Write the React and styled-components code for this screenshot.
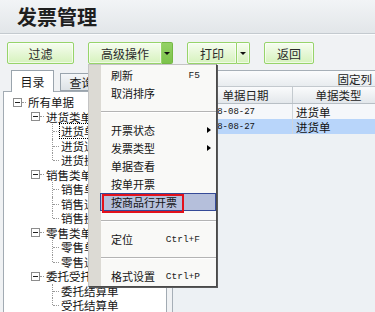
import React from "react"
import styled, { createGlobalStyle, css } from "styled-components"

const GlobalStyle = createGlobalStyle`
  html, body {
    margin: 0;
    padding: 0;
  }
  body {
    background: #f0f2f4;
    font-family: "Noto Sans CJK SC", "Noto Sans", sans-serif;
  }
`

const tree = [
  { label: '所有单据', level: 0 },
  { label: '进货类单据', level: 1 },
  { label: '进货单', level: 2, focus: true },
  { label: '进货退货单', level: 2 },
  { label: '进货换货单', level: 2, last: true },
  { label: '销售类单据', level: 1 },
  { label: '销售单', level: 2 },
  { label: '销售退货单', level: 2 },
  { label: '销售换货单', level: 2, last: true },
  { label: '零售类单据', level: 1 },
  { label: '零售单', level: 2 },
  { label: '零售退货单', level: 2, last: true },
  { label: '委托受托单据', level: 1 },
  { label: '委托结算单', level: 2 },
  { label: '受托结算单', level: 2, last: true },
]

const menu = [
  { label: '刷新', key: 'F5' },
  { label: '取消排序' },
  { sep: true },
  { label: '开票状态', sub: true },
  { label: '发票类型', sub: true },
  { label: '单据查看' },
  { label: '按单开票' },
  { label: '按商品行开票', active: true },
  { sep: true },
  { label: '定位', key: 'Ctrl+F' },
  { sep: true },
  { label: '格式设置', key: 'Ctrl+P' },
]

const rows = [
  { date: '2018-08-27', type: '进货单' },
  { date: '2018-08-27', type: '进货单', selected: true },
]

function App() {
  return (
    <Screen>
      <GlobalStyle />
      <TitleBar>
        <Title>发票管理</Title>
      </TitleBar>

      <Toolbar>
        <Button $w={67}>过滤</Button>
        <SplitGroup>
          <Button $w={74} $split>高级操作</Button>
          <ArrowButton $w={11} $open><Caret /></ArrowButton>
          <Menu>
            {menu.map((m, i) =>
              m.sep ? (
                <Separator key={i} />
              ) : (
                <MenuItem key={i} $active={m.active} $sub={m.sub}>
                  <span>{m.label}</span>
                  {m.key && <Shortcut>{m.key}</Shortcut>}
                  {m.sub && <SubArrow />}
                  {m.active && <Annotation />}
                </MenuItem>
              )
            )}
          </Menu>
        </SplitGroup>
        <SplitGroup>
          <Button $w={50} $split>打印</Button>
          <ArrowButton $w={13}><Caret /></ArrowButton>
        </SplitGroup>
        <Button $w={50}>返回</Button>
      </Toolbar>

      <Main>
        <LeftPanel>
          <TabStrip>
            <Tab $active>目录</Tab>
            <Tab>查询</Tab>
          </TabStrip>
          <TreeBox>
            {tree.map((n, i) => (
              <TreeRow key={i} $level={n.level}>
                {n.level < 2 ? (
                  <>
                    <Expander />
                    <Dash />
                  </>
                ) : (
                  <Connector $last={n.last} />
                )}
                <NodeLabel $focus={n.focus}>{n.label}</NodeLabel>
              </TreeRow>
            ))}
          </TreeBox>
        </LeftPanel>

        <GridPanel>
          <FixedBar>固定列</FixedBar>
          <HeaderRow>
            <HeadCell $w={26} />
            <HeadCell $w={94}>单据日期</HeadCell>
            <HeadCell $w={92}>单据类型</HeadCell>
          </HeaderRow>
          {rows.map((r, i) => (
            <DataRow key={i} $selected={r.selected}>
              <DataCell $w={26} />
              <DataCell $w={94} $mono>{r.date}</DataCell>
              <DataCell $w={92}>{r.type}</DataCell>
            </DataRow>
          ))}
        </GridPanel>
      </Main>
    </Screen>
  )
}

const Screen = styled.div`
  width: 375px;
  height: 312px;
  overflow: hidden;
  display: flex;
  flex-direction: column;
  background: #f0f2f4;
`

const TitleBar = styled.div`
  flex: none;
  height: 33px;
  display: flex;
  align-items: center;
  padding-left: 17px;
  background: linear-gradient(#f2f4f6, #e2e6e9);
  border-bottom: 1px solid #c4cacf;
  box-shadow: 0 1px 0 #fbfcfd;
`

const Title = styled.h1`
  margin: 0;
  font-size: 20px;
  font-weight: 700;
  line-height: 1;
  color: #1e1e1e;
`

const Toolbar = styled.div`
  flex: none;
  display: flex;
  align-items: center;
  gap: 14px;
  padding: 8px 0 0 7px;
`

const Button = styled.button`
  width: ${p => p.$w}px;
  height: 22px;
  padding: 0;
  box-sizing: border-box;
  border: 1px solid #97d46a;
  border-radius: 2px;
  ${p => p.$split && css`
    border-top-right-radius: 0;
    border-bottom-right-radius: 0;
  `}
  background: linear-gradient(#f6fdf0, #d6f2bd);
  box-shadow: inset 0 0 0 1px rgba(255, 255, 255, 0.6);
  font: 12px "Noto Sans CJK SC", sans-serif;
  color: #2a2a2a;
`

const SplitGroup = styled.div`
  position: relative;
  display: flex;
`

const ArrowButton = styled(Button)`
  display: flex;
  align-items: center;
  justify-content: center;
  border-left: none;
  border-radius: 0 2px 2px 0;
  ${p => p.$open && css`
    background: linear-gradient(#94d166, #7cc34b);
    border-color: #74b844;
    box-shadow: none;
  `}
`

const Caret = styled.span`
  width: 0;
  height: 0;
  border-left: 3px solid transparent;
  border-right: 3px solid transparent;
  border-top: 3px solid #111;
`

const Menu = styled.div`
  position: absolute;
  top: 100%;
  left: 0;
  z-index: 10;
  width: 129px;
  box-sizing: border-box;
  padding: 1px 0;
  background: linear-gradient(to right, #dcdad4 0 12px, #f9f9f7 12px);
  border: 1px solid #c4c4c4;
  border-right-color: #4a4a4a;
  border-bottom-color: #4a4a4a;
  box-shadow: 1px 1px 0 #5a5a5a;
`

const MenuItem = styled.div`
  position: relative;
  display: flex;
  align-items: center;
  justify-content: space-between;
  height: 18px;
  box-sizing: border-box;
  padding: 0 ${p => (p.$sub ? 5 : 16)}px 0 22px;
  font-size: 11px;
  color: #151515;
  white-space: nowrap;
  ${p => p.$active && css`
    margin-left: 11px;
    padding-left: 10px;
    background: #b5bfdb;
    border: 1px solid #364b98;
  `}
`

const Shortcut = styled.span`
  font: 9.5px "Liberation Mono", monospace;
  color: #222;
`

const SubArrow = styled.span`
  width: 0;
  height: 0;
  border-top: 3.5px solid transparent;
  border-bottom: 3.5px solid transparent;
  border-left: 4px solid #000;
`

const Annotation = styled.span`
  position: absolute;
  left: 1px;
  top: 0;
  width: 82px;
  height: 19px;
  box-sizing: border-box;
  border: 2px solid #e3111b;
`

const Separator = styled.div`
  height: 19px;
  margin-left: 12px;
  display: flex;
  align-items: center;
  &::before {
    content: '';
    flex: 1;
    height: 1px;
    background: #b4b4b4;
    box-shadow: 0 1px 0 #ffffff;
  }
`

const Main = styled.div`
  flex: 1;
  min-height: 0;
  display: flex;
  gap: 5px;
  margin-top: 6px;
  padding-left: 3px;
`

const LeftPanel = styled.div`
  flex: none;
  width: 164px;
  display: flex;
  flex-direction: column;
`

const TabStrip = styled.div`
  display: flex;
  align-items: flex-end;
  gap: 6px;
  height: 21px;
  padding-left: 8px;
  position: relative;
  z-index: 1;
`

const Tab = styled.div`
  width: 43px;
  height: ${p => (p.$active ? 22 : 18)}px;
  box-sizing: border-box;
  display: flex;
  align-items: center;
  justify-content: center;
  border: 1px solid #9aa4ad;
  border-bottom: ${p => (p.$active ? 'none' : '1px solid #9aa4ad')};
  background: ${p => (p.$active ? '#ffffff' : 'linear-gradient(#f4f6f8, #dde2e6)')};
  font-size: 12px;
  color: #1a1a1a;
  margin-bottom: ${p => (p.$active ? -1 : 0)}px;
`

const TreeBox = styled.div`
  flex: 1;
  overflow: hidden;
  background: #ffffff;
  border: 1px solid #a2abb3;
  border-bottom: none;
  padding-top: 3px;
`

const TreeRow = styled.div`
  display: flex;
  align-items: center;
  height: 14.5px;
  white-space: nowrap;
  padding-left: ${p => [9, 27, 48][p.$level]}px;
`

const Expander = styled.span`
  flex: none;
  width: 9px;
  height: 9px;
  box-sizing: border-box;
  display: flex;
  align-items: center;
  justify-content: center;
  border: 1px solid #8c8c8c;
  background: #fff;
  &::before {
    content: '';
    width: 5px;
    height: 1px;
    background: #222;
  }
`

const Dash = styled.span`
  flex: none;
  width: 4px;
  border-top: 1px dotted #999;
`

const Connector = styled.span`
  position: relative;
  flex: none;
  align-self: stretch;
  width: 7px;
  &::before {
    content: '';
    position: absolute;
    left: 0;
    top: 0;
    bottom: ${p => (p.$last ? '50%' : '0')};
    border-left: 1px dotted #999;
  }
  &::after {
    content: '';
    position: absolute;
    left: 1px;
    right: 0;
    top: 50%;
    border-top: 1px dotted #999;
  }
`

const NodeLabel = styled.span`
  padding: 0 1px;
  line-height: 14px;
  font-size: 11.5px;
  color: #141414;
  border: 1px ${p => (p.$focus ? 'dotted #000' : 'solid transparent')};
`

const GridPanel = styled.div`
  flex: 1;
  min-width: 0;
  overflow: hidden;
  background: #edf1f4;
  border-left: 1px solid #a6afb7;
  border-top: 1px solid #a6afb7;
`

const FixedBar = styled.div`
  height: 15px;
  display: flex;
  align-items: center;
  justify-content: flex-end;
  padding-right: 3px;
  font-size: 11.5px;
  color: #222;
  background: linear-gradient(#fbfcfd, #e8ecef);
  border-bottom: 1px solid #c3c9ce;
`

const HeaderRow = styled.div`
  display: flex;
  height: 16px;
  background: linear-gradient(#fafbfc, #e3e7eb);
  border-bottom: 1px solid #b8bfc5;
`

const HeadCell = styled.div`
  flex: none;
  width: ${p => p.$w}px;
  box-sizing: border-box;
  display: flex;
  align-items: center;
  justify-content: center;
  border-right: 1px solid #c4cacf;
  font-size: 11.5px;
  color: #222;
`

const DataRow = styled.div`
  display: flex;
  height: 15px;
  background: ${p => (p.$selected ? '#b8d5fa' : '#f5f7fa')};
`

const DataCell = styled.div`
  flex: none;
  width: ${p => p.$w}px;
  box-sizing: border-box;
  display: flex;
  align-items: center;
  padding-left: ${p => (p.$mono ? 2 : 3)}px;
  border-right: 1px solid #cfd5db;
  white-space: nowrap;
  color: #111;
  ${p => p.$mono
    ? css`font: 9px "Liberation Mono", monospace;`
    : css`font-size: 11.5px;`}
`

export default App
